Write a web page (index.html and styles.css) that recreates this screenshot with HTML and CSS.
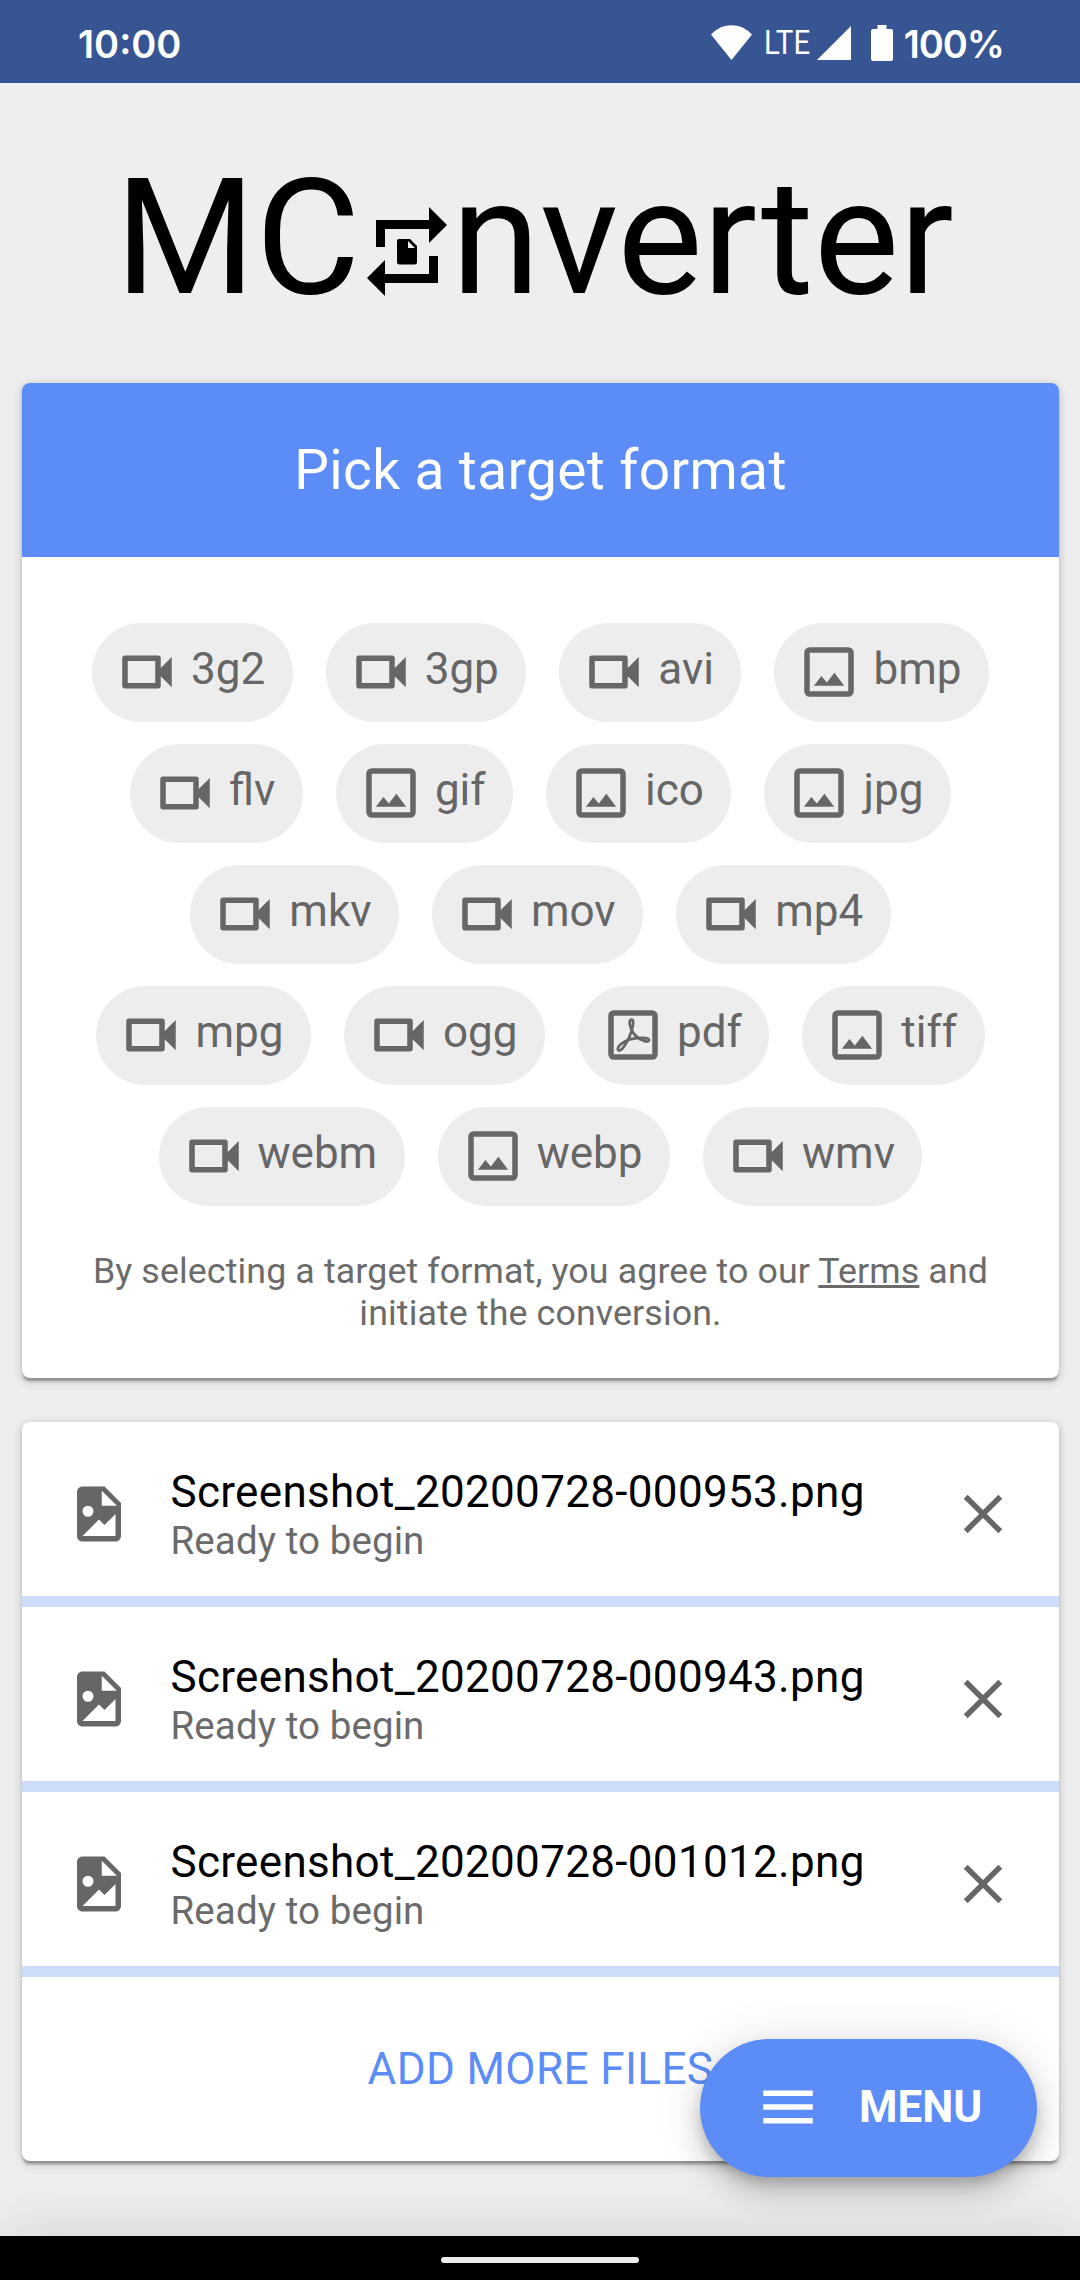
FILE: index.html
```html
<!DOCTYPE html>
<html lang="en">
<head>
<meta charset="utf-8">
<title>MConverter</title>
<link rel="stylesheet" href="styles.css">
</head>
<body>
<svg class="sprite" aria-hidden="true">
  <symbol id="video" viewBox="0 0 24 24"><path d="M15,8V16H5V8H15M16,6H4A1,1 0 0,0 3,7V17A1,1 0 0,0 4,18H16A1,1 0 0,0 17,17V13.5L21,17.5V6.5L17,10.5V7A1,1 0 0,0 16,6Z"/></symbol>
  <symbol id="image" viewBox="0 0 24 24"><path d="M19,19H5V5H19M19,3H5A2,2 0 0,0 3,5V19A2,2 0 0,0 5,21H19A2,2 0 0,0 21,19V5A2,2 0 0,0 19,3M13.96,12.29L11.21,15.83L9.25,13.47L6.5,17H17.5L13.96,12.29Z"/></symbol>
  <symbol id="pdf" viewBox="0 0 24 24"><path d="M19,19H5V5H19M19,3H5A2,2 0 0,0 3,5V19A2,2 0 0,0 5,21H19A2,2 0 0,0 21,19V5A2,2 0 0,0 19,3Z"/><path class="line" d="M11.5,6.4C10.2,6.4 10.8,9.4 12.3,11.5C13.7,13.5 17.5,15.2 17.8,14C18.1,12.7 14,12.9 11.2,13.5C8.6,14.1 5.9,16.4 6.6,17.4C7.3,18.4 9.3,15.9 10.5,13.1C11.7,10.4 12.8,6.4 11.5,6.4Z"/></symbol>
  <symbol id="file" viewBox="0 0 24 24"><path d="M13,9H18.5L13,3.5V9M6,2H14L20,8V20A2,2 0 0,1 18,22H6C4.89,22 4,21.1 4,20V4C4,2.89 4.89,2 6,2M6,20H15L18,20V12L14,16L12,14L6,20M8,9A2,2 0 0,0 6,11A2,2 0 0,0 8,13A2,2 0 0,0 10,11A2,2 0 0,0 8,9Z"/></symbol>
  <symbol id="close" viewBox="0 0 24 24"><path d="M19,6.41L17.59,5L12,10.59L6.41,5L5,6.41L10.59,12L5,17.59L6.41,19L12,13.41L17.59,19L19,17.59L13.41,12L19,6.41Z"/></symbol>
  <symbol id="menu" viewBox="0 0 24 24"><path d="M3,6H21V8H3V6M3,11H21V13H3V11M3,16H21V18H3V16Z"/></symbol>
</svg>

<div class="status">
  <span class="clock">10:00</span>
  <div class="status-icons">
    <svg class="wifi" viewBox="0 0 41 35"><path d="M0,9.5C11,-3 30,-3 41,9.5L20.5,35Z"/></svg>
    <span class="lte">LTE</span>
    <svg class="signal" viewBox="0 0 34 34"><path d="M34,0V34H0Z"/></svg>
    <svg class="battery" viewBox="0 0 22 36"><path d="M6.5,0H15.5V4H20A2,2 0 0,1 22,6V34A2,2 0 0,1 20,36H2A2,2 0 0,1 0,34V6A2,2 0 0,1 2,4H6.5Z"/></svg>
    <span class="percent">100%</span>
  </div>
</div>

<main class="page">
  <h1 class="brand">
    <span>MC</span>
    <svg class="brand-icon" viewBox="0 0 80 89"><path d="M9,13H62V0L80,18L62,36V22H18V40H9ZM71,49V76H18V89L0,71L18,53V67H62V49Z"/><path d="M32,32H43L50,39V55A2.5,2.5 0 0,1 47.5,57.5H32.5A2.5,2.5 0 0,1 30,55V34A2,2 0 0,1 32,32ZM41,34V41H48Z" fill-rule="evenodd"/></svg>
    <span>nverter</span>
  </h1>

  <section class="card">
    <h2 class="card-head">Pick a target format</h2>
    <div class="chips">
      <button class="chip"><svg><use href="#video"/></svg><span>3g2</span></button>
      <button class="chip"><svg><use href="#video"/></svg><span>3gp</span></button>
      <button class="chip"><svg><use href="#video"/></svg><span>avi</span></button>
      <button class="chip"><svg><use href="#image"/></svg><span>bmp</span></button>
      <button class="chip"><svg><use href="#video"/></svg><span>flv</span></button>
      <button class="chip"><svg><use href="#image"/></svg><span>gif</span></button>
      <button class="chip"><svg><use href="#image"/></svg><span>ico</span></button>
      <button class="chip"><svg><use href="#image"/></svg><span>jpg</span></button>
      <button class="chip"><svg><use href="#video"/></svg><span>mkv</span></button>
      <button class="chip"><svg><use href="#video"/></svg><span>mov</span></button>
      <button class="chip"><svg><use href="#video"/></svg><span>mp4</span></button>
      <button class="chip"><svg><use href="#video"/></svg><span>mpg</span></button>
      <button class="chip"><svg><use href="#video"/></svg><span>ogg</span></button>
      <button class="chip"><svg><use href="#pdf"/></svg><span>pdf</span></button>
      <button class="chip"><svg><use href="#image"/></svg><span>tiff</span></button>
      <button class="chip"><svg><use href="#video"/></svg><span>webm</span></button>
      <button class="chip"><svg><use href="#image"/></svg><span>webp</span></button>
      <button class="chip"><svg><use href="#video"/></svg><span>wmv</span></button>
    </div>
    <p class="terms">By selecting a target format, you agree to our <a href="#">Terms</a> and initiate the conversion.</p>
  </section>

  <section class="card files">
    <div class="file">
      <svg><use href="#file"/></svg>
      <div class="file-text"><span class="name">Screenshot_20200728-000953.png</span><span class="state">Ready to begin</span></div>
      <svg><use href="#close"/></svg>
    </div>
    <div class="file">
      <svg><use href="#file"/></svg>
      <div class="file-text"><span class="name">Screenshot_20200728-000943.png</span><span class="state">Ready to begin</span></div>
      <svg><use href="#close"/></svg>
    </div>
    <div class="file">
      <svg><use href="#file"/></svg>
      <div class="file-text"><span class="name">Screenshot_20200728-001012.png</span><span class="state">Ready to begin</span></div>
      <svg><use href="#close"/></svg>
    </div>
    <button class="add">ADD MORE FILES</button>
  </section>
</main>

<button class="fab"><svg><use href="#menu"/></svg><span>MENU</span></button>
<div class="navbar"><span class="handle"></span></div>
</body>
</html>
```
FILE: styles.css
```css
* { box-sizing: border-box; }

body {
  margin: 0;
  width: 1080px;
  height: 2280px;
  display: flex;
  flex-direction: column;
  position: relative;
  overflow: hidden;
  background: #eee;
  font-family: Roboto, sans-serif;
  color: #000;
}

h1, h2, p { margin: 0; font-weight: 400; }
button { border: 0; padding: 0; margin: 0; background: none; font: inherit; }
svg { display: block; flex: none; fill: currentColor; }
.sprite { position: absolute; width: 0; height: 0; }
.line { fill: none; stroke: currentColor; stroke-width: 1; }

/* Status bar */
.status {
  height: 83px;
  flex: none;
  display: flex;
  justify-content: space-between;
  padding: 3px 76px 0 78px;
  background: #375592;
  color: #fff;
}
.clock, .percent {
  font: 600 38px/83px Inter, sans-serif;
}
.clock { letter-spacing: 0; }
.percent { letter-spacing: -1px; margin-left: 11px; }
.status-icons { display: flex; align-items: flex-start; }
.wifi { width: 41px; height: 35px; margin-top: 22px; }
.lte {
  width: 50px;
  margin-left: 12px;
  font-size: 33px;
  line-height: 80px;
  transform: scaleX(0.89);
  transform-origin: left;
}
.signal { width: 34px; height: 34px; margin: 23px 0 0 3px; }
.battery { width: 22px; height: 36px; margin: 22px 0 0 20px; }

/* Page */
.page {
  flex: 1;
  display: flex;
  flex-direction: column;
  padding: 0 21px 0 22px;
}
.brand {
  height: 300px;
  flex: none;
  display: flex;
  align-items: flex-start;
  padding: 61px 0 0 93px;
  font-size: 161px;
  line-height: 188px;
}
.brand-icon { width: 80px; height: 89px; margin: 63px 4px 0 7px; }

.card {
  border-radius: 8px;
  background: #fff;
  box-shadow: 0 5.5px 2.75px -2.75px rgba(0,0,0,.2), 0 2.75px 2.75px rgba(0,0,0,.14), 0 2.75px 10px 1px rgba(0,0,0,.16);
}
.card-head {
  height: 174px;
  border-radius: 8px 8px 0 0;
  background: #5c8df7;
  color: #fff;
  font-size: 55px;
  line-height: 174px;
  letter-spacing: 0.007em;
  text-align: center;
}

/* Format chips */
.chips {
  display: flex;
  flex-wrap: wrap;
  justify-content: center;
  gap: 22px 33px;
  padding: 66px 55px 0;
}
.chip {
  height: 99px;
  display: flex;
  align-items: center;
  gap: 11px;
  padding: 0 27.5px 0 22px;
  border-radius: 50px;
  background: #ededed;
  color: #666;
  font-size: 44px;
}
.chip svg { width: 66px; height: 66px; margin-bottom: 1px; }
.chip span { padding-bottom: 7px; }

.terms {
  padding: 44px 55px 44px;
  color: #6b6b6b;
  font-size: 35.75px;
  line-height: 42px;
  letter-spacing: 0.12px;
  text-align: center;
}
.terms a { color: inherit; text-decoration-thickness: 3px; }

/* File list */
.files { margin-top: 44px; }
.file {
  height: 185px;
  display: flex;
  align-items: flex-start;
  padding: 59px 43px 0 44px;
  border-bottom: 11px solid #cddcf9;
  color: #666;
}
.file svg { width: 66px; height: 66px; }
.file-text {
  flex: 1;
  display: flex;
  flex-direction: column;
  padding-left: 38.5px;
  margin-top: -14px;
}
.name { color: #000; font-size: 44px; line-height: 50px; letter-spacing: 0.32px; }
.state { color: #6b6b6b; font-size: 38.5px; line-height: 47px; letter-spacing: 0.1px; }
.add {
  width: 100%;
  height: 184px;
  color: #5c8df7;
  font-size: 44px;
  letter-spacing: 0.4px;
}

/* Floating menu button */
.fab {
  position: absolute;
  right: 43px;
  bottom: 103px;
  width: 337px;
  height: 138px;
  display: flex;
  align-items: center;
  gap: 38px;
  padding-left: 55px;
  padding-bottom: 2px;
  border-radius: 69px;
  background: #5c8df7;
  color: #fff;
  font-size: 44px;
  font-weight: 700;
  box-shadow: 0 8px 14px -3px rgba(0,0,0,.2), 0 16px 28px rgba(0,0,0,.14), 0 3px 50px rgba(0,0,0,.12);
}
.fab svg { width: 66px; height: 66px; }

/* System navigation */
.navbar {
  height: 44px;
  flex: none;
  display: flex;
  justify-content: center;
  align-items: center;
  padding-top: 4px;
  position: relative;
  background: #000;
  box-shadow: 0 0 60px rgba(0,0,0,.13);
}
.handle { width: 198px; height: 6px; border-radius: 3px; background: #ebebeb; }
```
